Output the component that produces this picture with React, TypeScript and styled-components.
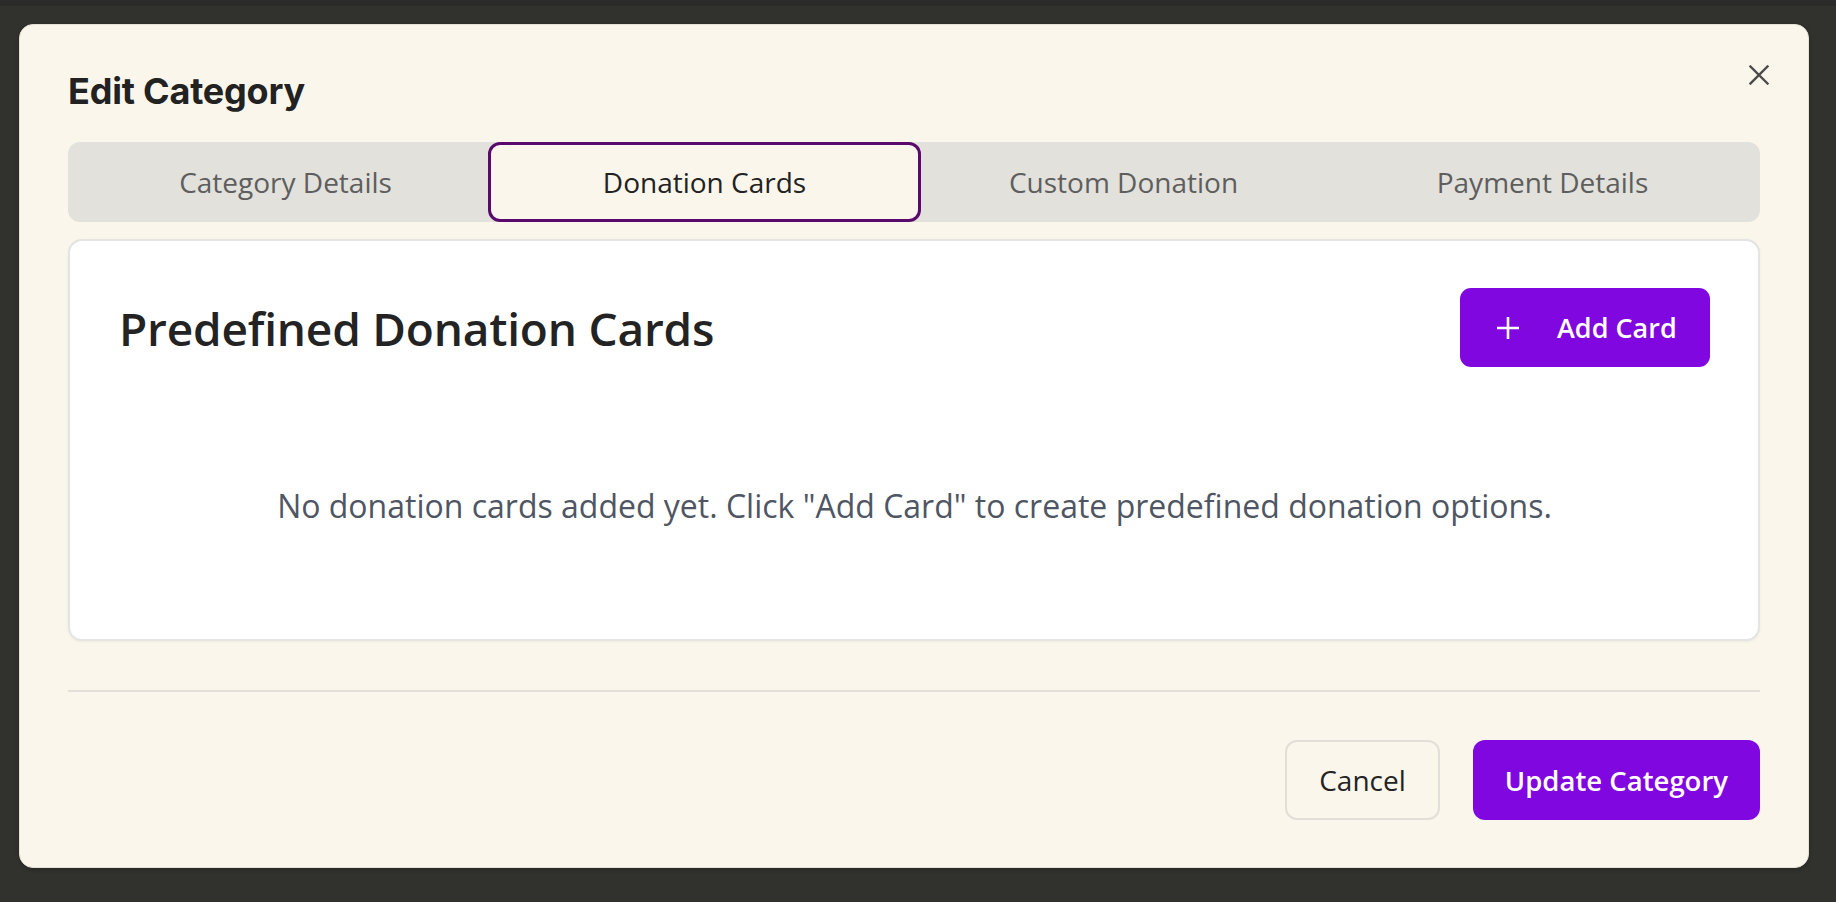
import { useState } from 'react'
import styled, { createGlobalStyle } from 'styled-components'

const TABS = ['Category Details', 'Donation Cards', 'Custom Donation', 'Payment Details']

export default function App() {
  const [active, setActive] = useState(1)

  return (
    <>
      <GlobalStyle />
      <Overlay>
        <Modal>
          <CloseButton aria-label="Close">
            <svg width="20" height="20" viewBox="0 0 20 20">
              <path d="M1.5 1.5 18.5 18.5M18.5 1.5 1.5 18.5" stroke="currentColor" strokeWidth="2.4" strokeLinecap="square" fill="none" />
            </svg>
          </CloseButton>

          <Title>Edit Category</Title>

          <TabBar>
            {TABS.map((t, i) => (
              <Tab key={t} $active={i === active} onClick={() => setActive(i)}>
                {t}
              </Tab>
            ))}
          </TabBar>

          <Card>
            <CardHeader>
              <CardTitle>Predefined Donation Cards</CardTitle>
              <AddButton>
                <svg width="22" height="22" viewBox="0 0 22 22">
                  <path d="M11 0v22M0 11h22" stroke="currentColor" strokeWidth="2.6" fill="none" />
                </svg>
                <span>Add Card</span>
              </AddButton>
            </CardHeader>
            <EmptyMessage>
              No donation cards added yet. Click "Add Card" to create predefined donation options.
            </EmptyMessage>
          </Card>

          <Divider />

          <Footer>
            <CancelButton>Cancel</CancelButton>
            <PrimaryButton>Update Category</PrimaryButton>
          </Footer>
        </Modal>
      </Overlay>
    </>
  )
}

// ── Styled Components ────────────────────────────────────────────────────────

const GlobalStyle = createGlobalStyle`
  html, body {
    margin: 0;
    padding: 0;
    background: #31312d;
  }
  body {
    font-family: 'Open Sans', 'Noto Sans', sans-serif;
  }
  * {
    box-sizing: border-box;
  }
`

const Overlay = styled.div`
  width: 1836px;
  height: 902px;
  background: #31312d;
  border-top: 6px solid #2b2b29;
  padding: 18px 27px 34px 19px;
  display: flex;
`

const Modal = styled.div`
  position: relative;
  flex: 1;
  display: flex;
  flex-direction: column;
  background: #faf6eb;
  border: 1px solid #e4e1d8;
  border-radius: 14px;
  padding: 45px 48px 47px 48px;
  box-shadow: 0 2px 4px rgba(0, 0, 0, 0.2);
`

const CloseButton = styled.button`
  position: absolute;
  top: 40px;
  right: 39px;
  width: 20px;
  height: 20px;
  padding: 0;
  border: none;
  background: none;
  color: #4b4b4b;
  display: flex;
  cursor: pointer;
`

const Title = styled.h2`
  margin: 0;
  font-family: 'Inter', 'Liberation Sans', sans-serif;
  font-size: 36px;
  line-height: 42px;
  font-weight: 700;
  letter-spacing: -0.2px;
  color: #222222;
`

const TabBar = styled.div`
  margin-top: 30px;
  height: 80px;
  display: grid;
  grid-template-columns: repeat(4, 1fr);
  padding: 0 8px;
  background: #e2e1dc;
  border-radius: 12px;
`

const Tab = styled.button<{ $active: boolean }>`
  margin: ${(p) => (p.$active ? '0 -7px' : '0')};
  border: ${(p) => (p.$active ? '3px solid #5a0a6c' : '3px solid transparent')};
  border-radius: 12px;
  background: ${(p) => (p.$active ? '#faf6eb' : 'transparent')};
  font-family: 'Open Sans', 'Noto Sans', sans-serif;
  font-size: 28px;
  font-weight: 400;
  color: ${(p) => (p.$active ? '#222222' : '#5e5e5e')};
  cursor: pointer;
  display: flex;
  align-items: center;
  justify-content: center;
  padding: 0;
`

const Card = styled.div`
  margin-top: 17px;
  background: #ffffff;
  border: 2px solid #e4e4e2;
  border-radius: 14px;
  padding: 47px 48px 48px 49px;
  box-shadow: 0 1px 3px rgba(0, 0, 0, 0.05);
`

const CardHeader = styled.div`
  display: flex;
  align-items: center;
  justify-content: space-between;
`

const CardTitle = styled.h3`
  margin: 0;
  font-size: 46px;
  line-height: 60px;
  font-weight: 600;
  letter-spacing: -0.2px;
  color: #232323;
`

const AddButton = styled.button`
  height: 79px;
  width: 250px;
  display: flex;
  align-items: center;
  gap: 38px;
  padding: 0 0 0 37px;
  border: none;
  border-radius: 11px;
  background: #8107e1;
  color: #ffffff;
  font-family: 'Open Sans', 'Noto Sans', sans-serif;
  font-size: 27px;
  font-weight: 600;
  cursor: pointer;
`

const EmptyMessage = styled.p`
  margin: 54px 0 0 0;
  padding: 61px 0;
  text-align: center;
  font-size: 32px;
  line-height: 48px;
  color: #4f5663;
`

const Divider = styled.div`
  margin-top: 49px;
  height: 2px;
  background: #e3e0da;
`

const Footer = styled.div`
  margin-top: 48px;
  display: flex;
  justify-content: flex-end;
  gap: 33px;
`

const CancelButton = styled.button`
  height: 80px;
  padding: 0 32px;
  border: 2px solid #e2dfd9;
  border-radius: 12px;
  background: transparent;
  font-family: 'Open Sans', 'Noto Sans', sans-serif;
  font-size: 28px;
  font-weight: 400;
  color: #232323;
  cursor: pointer;
`

const PrimaryButton = styled.button`
  height: 80px;
  padding: 0 32px;
  border: none;
  border-radius: 12px;
  background: #8107e1;
  font-family: 'Open Sans', 'Noto Sans', sans-serif;
  font-size: 27.5px;
  font-weight: 600;
  color: #ffffff;
  cursor: pointer;
`
